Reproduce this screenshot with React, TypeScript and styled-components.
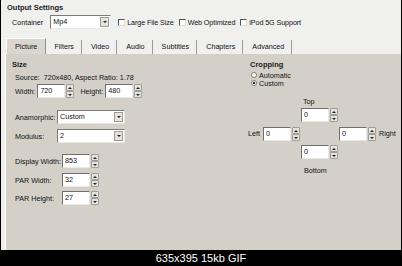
import { styled, createGlobalStyle } from "styled-components"

const GlobalStyle = createGlobalStyle`
  html, body {
    margin: 0;
    padding: 0;
    background: #000;
  }
  body {
    font-family: "Liberation Sans", Arial, sans-serif;
    font-size: 7.2px;
    color: #111;
  }
`

const tabs = ["Picture", "Filters", "Video", "Audio", "Subtitles", "Chapters", "Advanced"]

function Select({ value, width }: { value: string; width: number }) {
  return (
    <SelectBox style={{ width }}>
      <SelectText>{value}</SelectText>
      <DropButton>
        <Triangle $dir="down" />
      </DropButton>
    </SelectBox>
  )
}

function SpinBox({ value }: { value: string }) {
  return (
    <Spin>
      <Field>{value}</Field>
      <Arrows>
        <ArrowButton>
          <Triangle $dir="up" />
        </ArrowButton>
        <ArrowButton>
          <Triangle $dir="down" />
        </ArrowButton>
      </Arrows>
    </Spin>
  )
}

export default function App() {
  return (
    <>
      <GlobalStyle />
      <Root>
        <Header>
          <Title>Output Settings</Title>
          <ContainerRow>
            <span>Container</span>
            <Select value="Mp4" width={61} />
            <Checks>
              <Check>
                <Box />
                Large File Size
              </Check>
              <Check>
                <Box />
                Web Optimized
              </Check>
              <Check>
                <Box />
                iPod 5G Support
              </Check>
            </Checks>
          </ContainerRow>
          <TabStrip>
            {tabs.map((t, i) => (
              <Tab key={t} $active={i === 0}>
                {t}
              </Tab>
            ))}
          </TabStrip>
        </Header>

        <Panel>
          <Column>
            <Title>Size</Title>
            <Indent>
              <SourceLine>Source:&nbsp; 720x480, Aspect Ratio: 1.78</SourceLine>
              <SizeRow>
                <span>Width:</span>
                <SpinBox value="720" />
                <HeightLabel>Height:</HeightLabel>
                <SpinBox value="480" />
              </SizeRow>
              <FormRow $labelWidth={42} $top={12}>
                <span>Anamorphic:</span>
                <Select value="Custom" width={68} />
              </FormRow>
              <FormRow $labelWidth={42} $top={5}>
                <span>Modulus:</span>
                <Select value="2" width={68} />
              </FormRow>
              <FormRow $labelWidth={47} $top={11}>
                <span>Display Width:</span>
                <SpinBox value="853" />
              </FormRow>
              <FormRow $labelWidth={47} $top={5}>
                <span>PAR Width:</span>
                <SpinBox value="32" />
              </FormRow>
              <FormRow $labelWidth={47} $top={4}>
                <span>PAR Height:</span>
                <SpinBox value="27" />
              </FormRow>
            </Indent>
          </Column>

          <Column>
            <Title>Cropping</Title>
            <Radios>
              <Radio>
                <Circle />
                Automatic
              </Radio>
              <Radio>
                <Circle $checked />
                Custom
              </Radio>
            </Radios>
            <CropGrid>
              <CropLabel $col={3} $row={1} $pad={2}>
                Top
              </CropLabel>
              <CropCell $col={3} $row={2}>
                <SpinBox value="0" />
              </CropCell>
              <CropLabel $col={1} $row={3} $pad={0} $center>
                Left
              </CropLabel>
              <CropCell $col={2} $row={3}>
                <SpinBox value="0" />
              </CropCell>
              <CropCell $col={4} $row={3}>
                <SpinBox value="0" />
              </CropCell>
              <CropLabel $col={5} $row={3} $pad={2} $center>
                Right
              </CropLabel>
              <CropCell $col={3} $row={4}>
                <SpinBox value="0" />
              </CropCell>
              <CropLabel $col={3} $row={5} $pad={3}>
                Bottom
              </CropLabel>
            </CropGrid>
          </Column>
        </Panel>

        <Caption>635x395 15kb GIF</Caption>
      </Root>
    </>
  )
}

const Root = styled.div`
  width: 402px;
  height: 266px;
  box-sizing: border-box;
  border-left: 1px solid #000;
  border-right: 1px solid #000;
  background: #f0f0ef;
  display: flex;
  flex-direction: column;
  overflow: hidden;
`

const Header = styled.div`
  padding: 3px 0 0 4px;
  display: flex;
  flex-direction: column;
`

const Title = styled.div`
  font-weight: bold;
  font-size: 7.5px;
  line-height: 9px;
  height: 9px;
  margin-left: 2px;
  color: #1a1a1a;
  white-space: nowrap;
`

const ContainerRow = styled.div`
  margin: 3px 0 0 7px;
  height: 14px;
  display: flex;
  align-items: center;
  gap: 7px;
  white-space: nowrap;
`

const Checks = styled.div`
  display: flex;
  align-items: center;
  gap: 5px;
`

const Check = styled.label`
  display: flex;
  align-items: center;
  gap: 2px;
  letter-spacing: -0.1px;
`

const Box = styled.span`
  width: 7px;
  height: 7px;
  box-sizing: border-box;
  background: #fff;
  border: 1px solid;
  border-color: #555 #ddd #ddd #555;
`

const TabStrip = styled.div`
  margin-top: 9px;
  margin-left: 1px;
  height: 16px;
  display: flex;
  align-items: flex-end;
`

const Tab = styled.div<{ $active?: boolean }>`
  height: ${({ $active }) => ($active ? "16px" : "14px")};
  box-sizing: border-box;
  padding: 0 ${({ $active }) => ($active ? "8px" : "7px")};
  display: flex;
  align-items: center;
  white-space: nowrap;
  margin-right: ${({ $active }) => ($active ? "1px" : "2px")};
  background: ${({ $active }) => ($active ? "#d9d6cf" : "transparent")};
  border-top: ${({ $active }) => ($active ? "1px solid #fff" : "none")};
  border-left: ${({ $active }) => ($active ? "1px solid #fff" : "none")};
  border-right: 1px solid ${({ $active }) => ($active ? "#8f8f8f" : "#9a9a9a")};
  padding-bottom: ${({ $active }) => ($active ? "0" : "1px")};
`

const Panel = styled.div`
  flex: 1;
  margin-left: 4px;
  background: #d4d0c8;
  border-left: 1px solid #fff;
  padding: 6px 0 0 4px;
  display: grid;
  grid-template-columns: 238px 1fr;
  align-content: start;
`

const Column = styled.div`
  display: flex;
  flex-direction: column;
`

const Indent = styled.div`
  margin-left: 5px;
  display: flex;
  flex-direction: column;
`

const SourceLine = styled.div`
  margin-top: 4px;
  line-height: 9px;
  white-space: nowrap;
`

const SizeRow = styled.div`
  margin-top: 2px;
  height: 14px;
  display: flex;
  align-items: center;
  white-space: nowrap;
  gap: 2px;
`

const HeightLabel = styled.span`
  margin-left: 4px;
`

const FormRow = styled.div<{ $labelWidth: number; $top: number }>`
  margin-top: ${({ $top }) => $top}px;
  height: 14px;
  display: grid;
  grid-template-columns: ${({ $labelWidth }) => $labelWidth}px auto;
  align-items: center;
  justify-content: start;
  white-space: nowrap;
`

const SelectBox = styled.div`
  height: 14px;
  box-sizing: border-box;
  background: #fff;
  border: 1px solid;
  border-color: #7a7a7a #e8e8e8 #e8e8e8 #7a7a7a;
  display: flex;
  align-items: stretch;
`

const SelectText = styled.span`
  flex: 1;
  padding-left: 2px;
  line-height: 12px;
`

const DropButton = styled.span`
  width: 9px;
  margin: 1px;
  box-sizing: border-box;
  background: #e6e3dc;
  border: 1px solid #9d9d9d;
  display: flex;
  align-items: center;
  justify-content: center;
`

const Triangle = styled.span<{ $dir: "up" | "down" }>`
  width: 0;
  height: 0;
  border-left: 2px solid transparent;
  border-right: 2px solid transparent;
  ${({ $dir }) =>
    $dir === "up" ? "border-bottom: 2px solid #222;" : "border-top: 2px solid #222;"}
`

const Spin = styled.div`
  display: flex;
  align-items: center;
  gap: 1px;
`

const Field = styled.div`
  width: 28px;
  height: 14px;
  box-sizing: border-box;
  background: #fff;
  border: 1px solid;
  border-color: #6f6f6f #e8e8e8 #e8e8e8 #6f6f6f;
  padding-left: 2px;
  line-height: 12px;
`

const Arrows = styled.div`
  width: 8px;
  height: 14px;
  display: flex;
  flex-direction: column;
`

const ArrowButton = styled.span`
  flex: 1;
  box-sizing: border-box;
  background: #e6e3dc;
  border: 1px solid #9d9d9d;
  border-radius: 1px;
  display: flex;
  align-items: center;
  justify-content: center;
`

const Radios = styled.div`
  margin: 2px 0 0 3px;
  display: flex;
  flex-direction: column;
`

const Radio = styled.label`
  height: 8px;
  display: flex;
  align-items: center;
  gap: 2px;
  white-space: nowrap;
`

const Circle = styled.span<{ $checked?: boolean }>`
  width: 6px;
  height: 6px;
  box-sizing: border-box;
  border-radius: 50%;
  border: 1px solid #7a7a7a;
  background: ${({ $checked }) =>
    $checked ? "radial-gradient(circle, #222 0 1.2px, #fff 1.4px)" : "#fff"};
`

const CropGrid = styled.div`
  margin-top: 10px;
  display: grid;
  grid-template-columns: 14px 37px 37px 37px auto;
  grid-template-rows: 11px 19px 18px 21px 9px;
  column-gap: 1px;
`

const CropCell = styled.div<{ $col: number; $row: number }>`
  grid-column: ${({ $col }) => $col};
  grid-row: ${({ $row }) => $row};
  align-self: start;
`

const CropLabel = styled.div<{ $col: number; $row: number; $pad: number; $center?: boolean }>`
  grid-column: ${({ $col }) => $col};
  grid-row: ${({ $row }) => $row};
  padding-left: ${({ $pad }) => $pad}px;
  line-height: ${({ $center }) => ($center ? "14px" : "9px")};
  align-self: start;
  white-space: nowrap;
`

const Caption = styled.div`
  height: 16px;
  background: #000;
  color: #fff;
  font-size: 11px;
  line-height: 16px;
  text-align: center;
`
